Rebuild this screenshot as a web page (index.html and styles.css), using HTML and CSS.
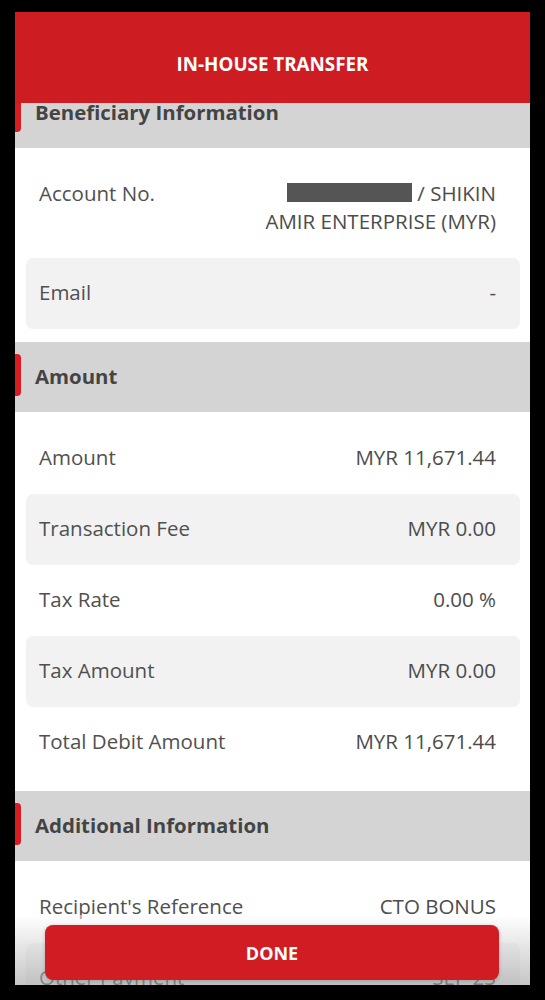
FILE: index.html
```html
<!DOCTYPE html>
<html lang="en">

<head>
    <meta charset="UTF-8" />
    <meta name="viewport" content="width=device-width, initial-scale=1.0" />
    <title>In-House Transfer</title>
    <link rel="stylesheet" href="styles.css">
</head>

<body>

    <div class="phone">
        <div class="topbar">IN-HOUSE TRANSFER</div>

        <div class="scroll">
            <div class="section">
                <div class="section-title">Beneficiary Information</div>
                <div class="section-body">
                    <div class="row">
                        <span class="label">Account No.</span>
                        <span class="value"><span class="masked"></span> / SHIKIN<br />AMIR ENTERPRISE (MYR)</span>
                    </div>
                    <div class="row alt">
                        <span class="label">Email</span>
                        <span class="value">-</span>
                    </div>
                </div>
            </div>

            <div class="section">
                <div class="section-title">Amount</div>
                <div class="section-body">
                    <div class="row">
                        <span class="label">Amount</span>
                        <span class="value">MYR 11,671.44</span>
                    </div>
                    <div class="row alt">
                        <span class="label">Transaction Fee</span>
                        <span class="value">MYR 0.00</span>
                    </div>
                    <div class="row">
                        <span class="label">Tax Rate</span>
                        <span class="value">0.00 %</span>
                    </div>
                    <div class="row alt">
                        <span class="label">Tax Amount</span>
                        <span class="value">MYR 0.00</span>
                    </div>
                    <div class="row">
                        <span class="label">Total Debit Amount</span>
                        <span class="value">MYR 11,671.44</span>
                    </div>
                </div>
            </div>

            <div class="section">
                <div class="section-title">Additional Information</div>
                <div class="section-body">
                    <div class="row">
                        <span class="label">Recipient's Reference</span>
                        <span class="value">CTO BONUS</span>
                    </div>
                    <div class="row alt">
                        <span class="label">Other Payment</span>
                        <span class="value">SEP 23</span>
                    </div>
                </div>
            </div>
        </div>

        <div class="bottom-fade">
            <button class="done-button">DONE</button>
        </div>
    </div>

</body>

</html>
```

FILE: styles.css
```css
html,
body {
    margin: 0;
    padding: 0;
}

body {
    background: #000;
    font-family: "Open Sans", "Liberation Sans", sans-serif;
    color: #555;
}

.phone {
    position: relative;
    width: 515px;
    height: 973px;
    margin: 12px 15px 0;
    background: #fff;
    overflow: hidden;
}

.topbar {
    position: relative;
    z-index: 2;
    height: 91px;
    box-sizing: border-box;
    padding-top: 13px;
    display: flex;
    align-items: center;
    justify-content: center;
    background: #cd1c22;
    color: #fff;
    font-weight: 700;
    font-size: 18.8px;
}

/* content is scrolled a little under the top bar */
.scroll {
    margin-top: -25px;
}

.section-title {
    position: relative;
    height: 70px;
    box-sizing: border-box;
    padding: 0 0 3px 20px;
    display: flex;
    align-items: center;
    background: #d4d4d4;
    color: #444;
    font-weight: 700;
    font-size: 20.4px;
}

.section-title::before {
    content: "";
    position: absolute;
    left: 0;
    top: 12px;
    width: 6px;
    height: 42px;
    background: #d91c22;
    border-radius: 0 4px 4px 0;
}

.section-body {
    padding: 11px 0 13px;
}

.row {
    display: flex;
    justify-content: space-between;
    align-items: flex-start;
    margin: 0 10px 0 11px;
    padding: 20px 24px 23px 13px;
    font-size: 20.5px;
    line-height: 28px;
    border-radius: 7px;
}

.row.alt {
    background: #f2f2f2;
}

.label {
    color: #505050;
}

.value {
    text-align: right;
    color: #4c4c4c;
}

.masked {
    display: inline-block;
    width: 125px;
    height: 19px;
    vertical-align: -1px;
    background: #555;
}

.bottom-fade {
    position: absolute;
    left: 0;
    right: 0;
    bottom: 0;
    height: 70px;
    background: linear-gradient(to bottom, rgba(255, 255, 255, 0.5), rgba(160, 160, 160, 0.6));
}

.done-button {
    position: absolute;
    left: 30px;
    right: 31px;
    top: 10px;
    height: 55px;
    border: none;
    border-radius: 8px;
    background: #d01c22;
    color: #fff;
    font-family: "Open Sans", "Liberation Sans", sans-serif;
    font-weight: 700;
    font-size: 18px;
    box-shadow: 0 1px 4px rgba(0, 0, 0, 0.2);
}
```
